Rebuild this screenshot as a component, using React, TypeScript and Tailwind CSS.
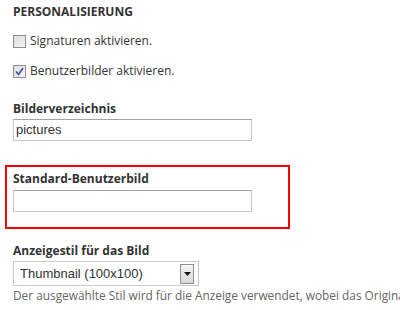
import React from 'react';

const labelFont = { fontFamily: '"Open Sans", "DejaVu Sans", sans-serif' };

function Checkbox({ checked }: { checked?: boolean }) {
  return (
    <span className="inline-flex h-[13px] w-[13px] shrink-0 items-center justify-center border border-[#8e8f8f] bg-gradient-to-br from-[#dcdcdc] to-[#f6f6f6]">
      {checked && (
        <svg width="9" height="9" viewBox="0 0 9 9">
          <path d="M1 4.5 L3.5 7.5 L8 1" fill="none" stroke="#3b4fa8" strokeWidth="1.6" />
        </svg>
      )}
    </span>
  );
}

function TextField({ value }: { value?: string }) {
  return (
    <div
      className="flex h-[22px] w-[239px] items-center border border-[#c9c9c9] border-t-[#a3a3a3] bg-white pl-[2px] text-[13px] text-[#333]"
      style={{ fontFamily: '"Liberation Sans", Arial, sans-serif' }}
    >
      {value}
    </div>
  );
}

export default function App() {
  return (
    <div className="h-[310px] w-[400px] overflow-hidden bg-white text-[12px] leading-[16px] text-[#333]" style={labelFont}>
      <div className="flex flex-col pl-[13px] pt-[4px]">
        <h2 className="font-bold text-[#333]">PERSONALISIERUNG</h2>

        <label className="mt-[13px] flex h-[16px] items-center gap-[4px]">
          <Checkbox />
          <span>Signaturen aktivieren.</span>
        </label>
        <label className="mt-[14px] flex h-[16px] items-center gap-[4px]">
          <Checkbox checked />
          <span>Benutzerbilder aktivieren.</span>
        </label>

        <div className="mt-[22px] font-bold">Bilderverzeichnis</div>
        <div className="mt-[2px]">
          <TextField value="pictures" />
        </div>
      </div>

      {/* markierter Bereich */}
      <div className="ml-[5px] mt-[24px] h-[64px] w-[285px] border-2 border-[#ff0000] pl-[6px] pt-[4px]">
        <div className="font-bold">Standard-Benutzerbild</div>
        <div className="mt-[3px]">
          <TextField />
        </div>
      </div>

      <div className="flex flex-col pl-[13px]">
        <div className="mt-[14px] font-bold">Anzeigestil für das Bild</div>
        <div
          className="mt-[2px] flex h-[25px] w-[186px] items-center justify-between border border-[#c9c9c9] bg-white pl-[6px] pr-[4px] text-[13px] text-[#333]"
          style={{ fontFamily: '"Liberation Sans", Arial, sans-serif' }}
        >
          <span>Thumbnail (100x100)</span>
          <span className="flex h-[20px] w-[14px] items-center justify-center border border-[#8e8f8f] bg-gradient-to-b from-[#f4f4f4] to-[#d8d8d8]">
            <svg width="7" height="4" viewBox="0 0 7 4">
              <path d="M0 0 H7 L3.5 4 Z" fill="#111" />
            </svg>
          </span>
        </div>
        <p className="mt-[1px] whitespace-nowrap text-[11.85px] text-[#666]">
          Der ausgewählte Stil wird für die Anzeige verwendet, wobei das Originalbild unverändert bleibt.
        </p>
      </div>
    </div>
  );
}
